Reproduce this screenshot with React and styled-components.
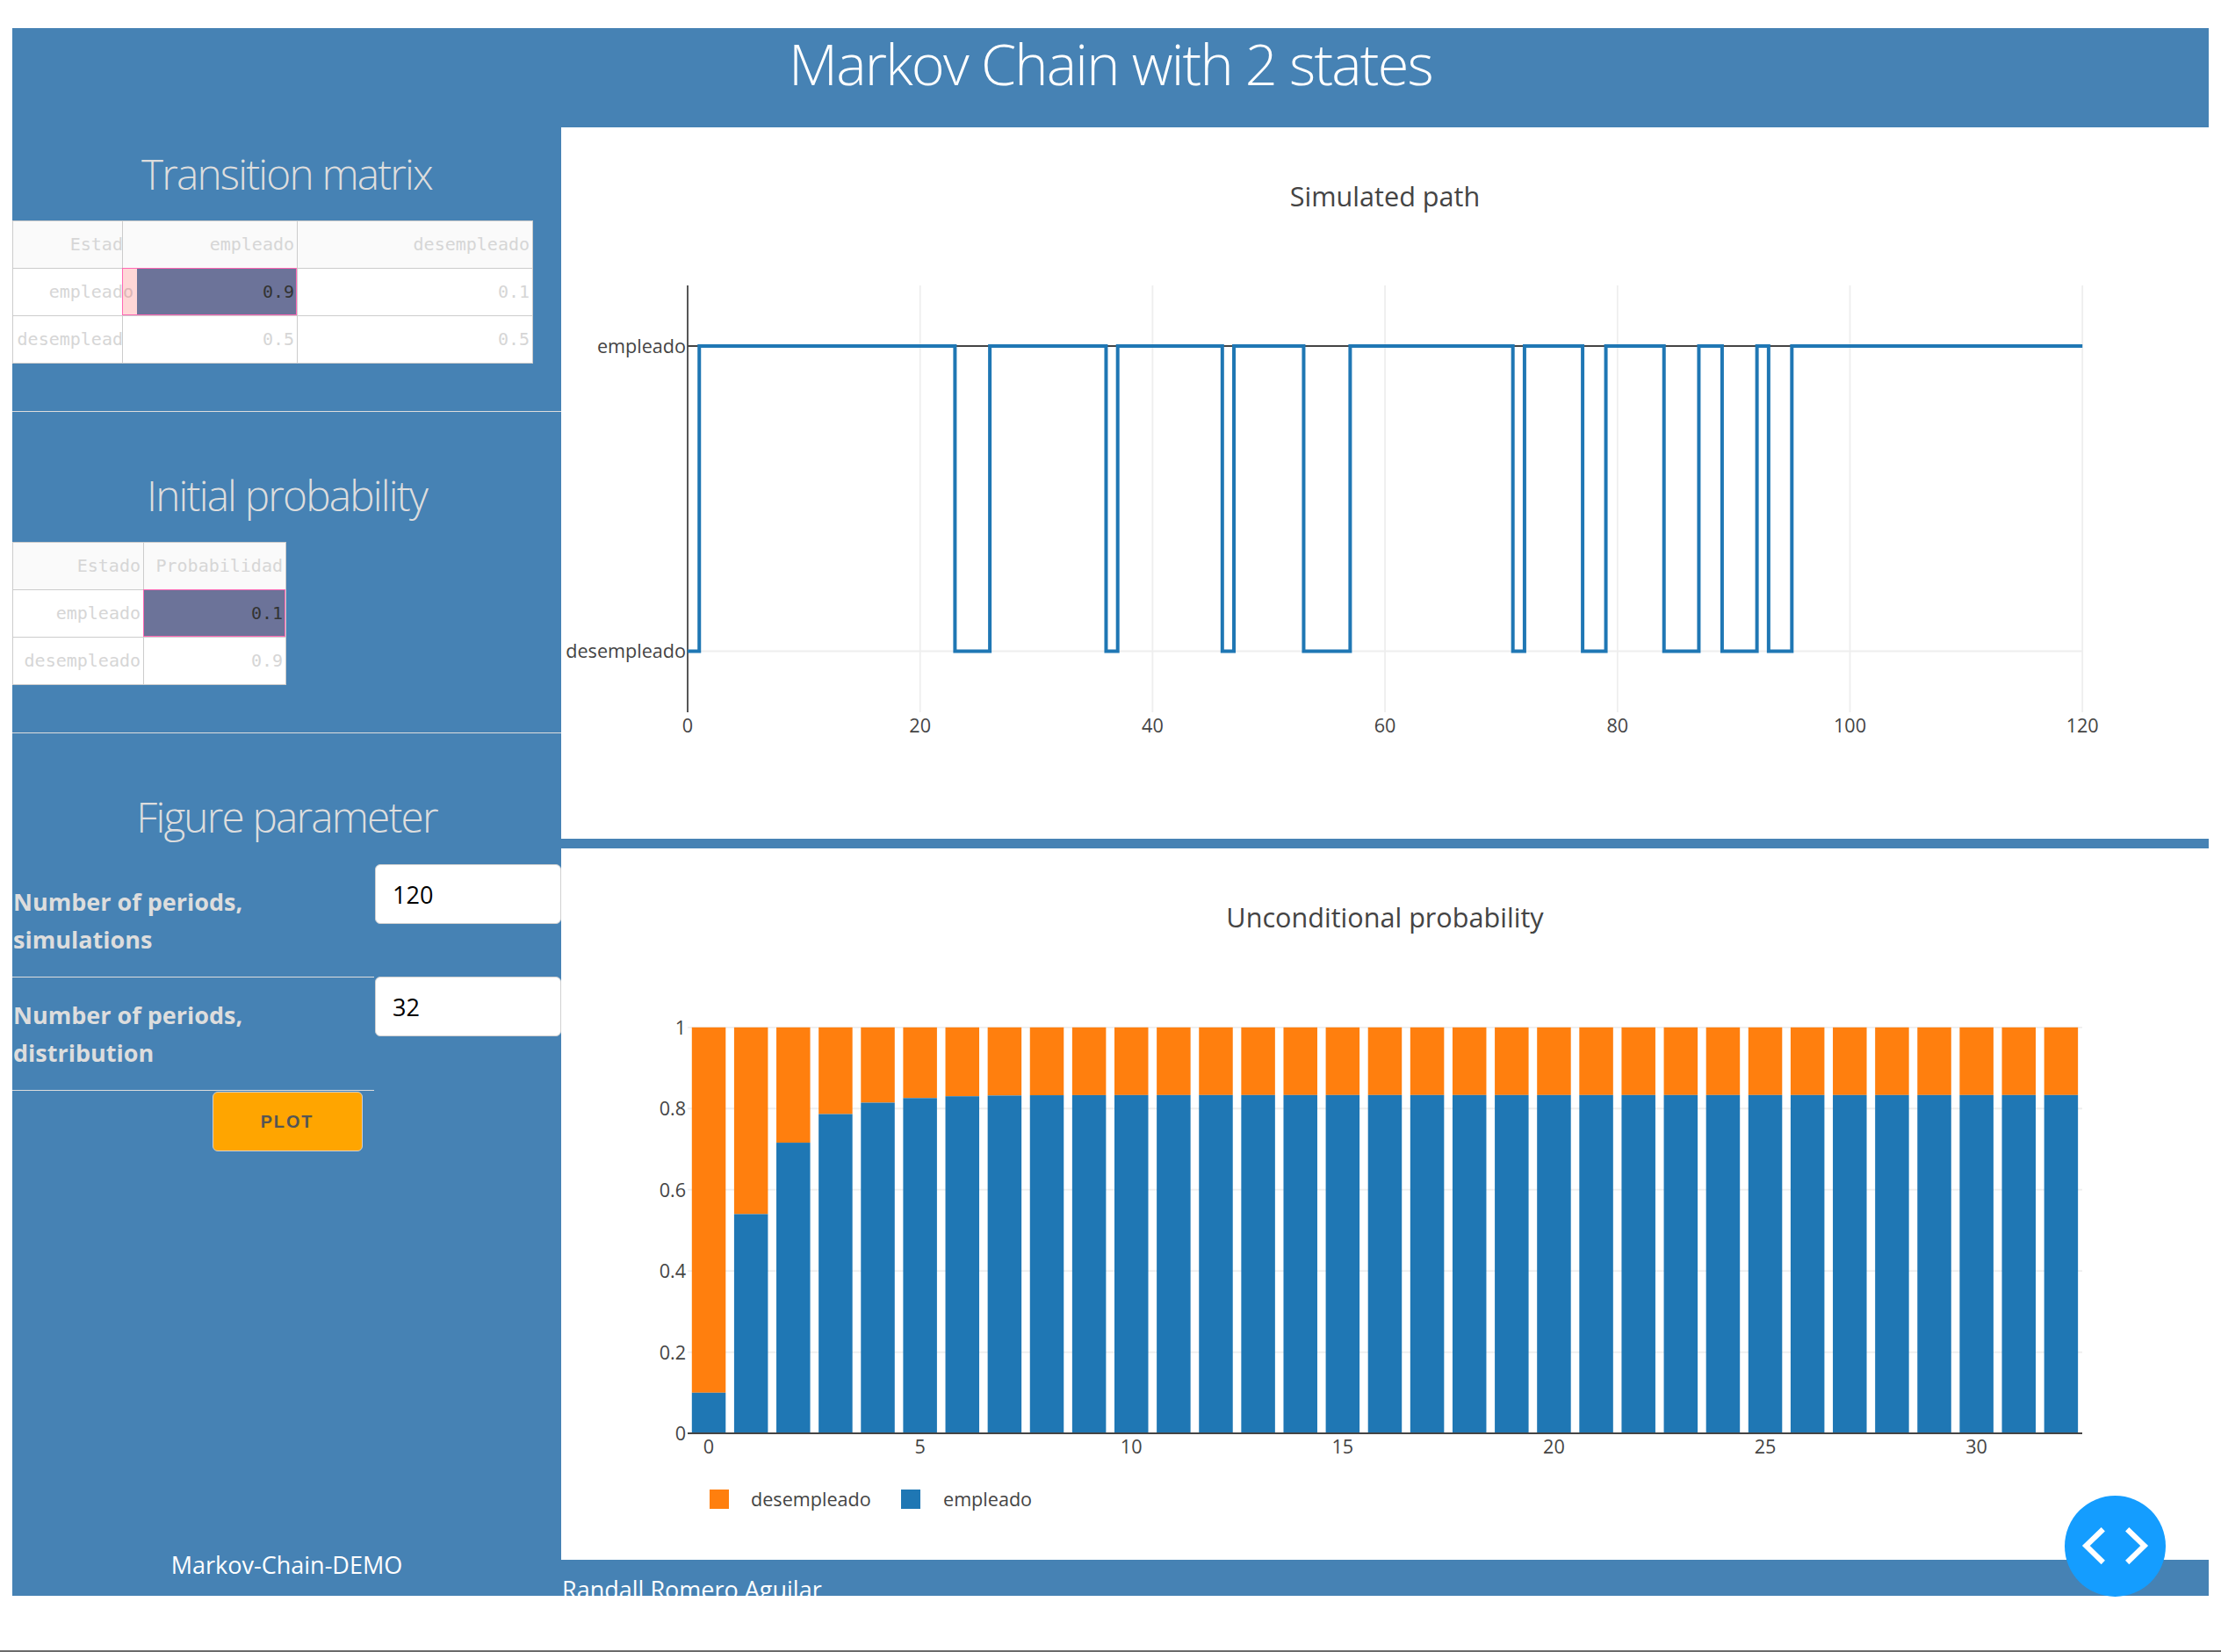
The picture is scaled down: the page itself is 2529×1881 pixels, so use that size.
import React from 'react'
import styled, { createGlobalStyle } from 'styled-components'

const STEEL = '#4682b4'
const BLUE = '#1f77b4'
const ORANGE = '#ff7f0e'

const GlobalStyle = createGlobalStyle`
  html, body {
    margin: 0;
    padding: 0;
    background: #fff;
    font-family: "Open Sans", "Liberation Sans", sans-serif;
  }
  * {
    box-sizing: border-box;
  }
`

// state changes of the simulated path, read from the chart: [period, state]
const SWITCHES = [1, 23, 26, 36, 37, 46, 47, 53, 57, 71, 72, 77, 79, 84, 87, 89, 92, 93, 95]

const pathX = (t) => 783 + t * 13.235
const Y_EMP = 394
const Y_DES = 741.5

const buildPath = () => {
  let d = `M${pathX(0)} ${Y_DES}`
  let y = Y_DES
  SWITCHES.forEach((t) => {
    const x = pathX(t)
    y = y === Y_DES ? Y_EMP : Y_DES
    d += ` H${x} V${y}`
  })
  return `${d} H${pathX(120)}`
}

const probabilities = () => {
  const values = [0.1]
  for (let i = 1; i <= 32; i++) {
    values.push(0.9 * values[i - 1] + 0.5 * (1 - values[i - 1]))
  }
  return values
}

const SimulatedPath = () => (
  <ChartSvg viewBox="639 145 1876 810">
    <ChartTitle x="1577" y="235">Simulated path</ChartTitle>
    {[20, 40, 60, 80, 100, 120].map((t) => (
      <line key={t} x1={pathX(t)} x2={pathX(t)} y1="325" y2="811" stroke="#eee" strokeWidth="1.8" />
    ))}
    <line x1="783" x2="2371" y1={Y_DES} y2={Y_DES} stroke="#eee" strokeWidth="1.8" />
    <line x1="783" x2="2371" y1={Y_EMP} y2={Y_EMP} stroke="#444" strokeWidth="1.8" />
    <line x1="783" x2="783" y1="325" y2="811" stroke="#444" strokeWidth="1.8" />
    <path d={buildPath()} fill="none" stroke={BLUE} strokeWidth="4" />
    <TickLabel x="781" y="402" textAnchor="end">empleado</TickLabel>
    <TickLabel x="781" y="749" textAnchor="end">desempleado</TickLabel>
    {[0, 20, 40, 60, 80, 100, 120].map((t) => (
      <TickLabel key={t} x={pathX(t)} y="834" textAnchor="middle">{t}</TickLabel>
    ))}
  </ChartSvg>
)

const Y0 = 1632
const UNIT = 462.2
const STEP = 48.12

const UnconditionalProbability = () => (
  <ChartSvg viewBox="639 966 1876 810">
    <ChartTitle x="1577" y="1056">Unconditional probability</ChartTitle>
    {[0.2, 0.4, 0.6, 0.8, 1].map((v) => (
      <line key={v} x1="783" x2="2371" y1={Y0 - v * UNIT} y2={Y0 - v * UNIT} stroke="#eee" strokeWidth="1.8" />
    ))}
    {probabilities().map((p, i) => {
      const x = 783 + STEP * i + 4.8
      return (
        <g key={i}>
          <rect x={x} y={Y0 - UNIT} width="38.5" height={(1 - p) * UNIT} fill={ORANGE} />
          <rect x={x} y={Y0 - p * UNIT} width="38.5" height={p * UNIT} fill={BLUE} />
        </g>
      )
    })}
    <line x1="783" x2="2371" y1={Y0} y2={Y0} stroke="#444" strokeWidth="2" />
    {[0, 0.2, 0.4, 0.6, 0.8, 1].map((v) => (
      <TickLabel key={v} x="781" y={Y0 - v * UNIT + 8} textAnchor="end">{v}</TickLabel>
    ))}
    {[0, 5, 10, 15, 20, 25, 30].map((t) => (
      <TickLabel key={t} x={807 + t * STEP} y="1655" textAnchor="middle">{t}</TickLabel>
    ))}
    <rect x="808" y="1696" width="22" height="22" fill={ORANGE} />
    <TickLabel x="855" y="1715">desempleado</TickLabel>
    <rect x="1026" y="1696" width="22" height="22" fill={BLUE} />
    <TickLabel x="1074" y="1715">empleado</TickLabel>
  </ChartSvg>
)

const DataTable = ({ columns, rows }) => (
  <Table $columns={columns}>
    {rows.flat().map((cell, i) => (
      <Cell key={i} $header={cell.header} $selected={cell.selected} $pink={cell.pink} $spill={cell.spill} $open={cell.open} $first={cell.first}>
        <span>
          {cell.text}
          {cell.tail && <CellTail>{cell.tail}</CellTail>}
        </span>
      </Cell>
    ))}
  </Table>
)

const transitionRows = [
  [
    { text: 'Estado', header: true, spill: true, first: true },
    { text: 'empleado', header: true },
    { text: 'desempleado', header: true },
  ],
  [
    { text: 'emplead', tail: 'o', spill: true, open: true, first: true },
    { text: '0.9', selected: true, pink: 16 },
    { text: '0.1' },
  ],
  [
    { text: 'desempleado', spill: true, first: true },
    { text: '0.5' },
    { text: '0.5' },
  ],
]

const initialRows = [
  [
    { text: 'Estado', header: true, first: true },
    { text: 'Probabilidad', header: true },
  ],
  [
    { text: 'empleado', first: true },
    { text: '0.1', selected: true },
  ],
  [
    { text: 'desempleado', first: true },
    { text: '0.9' },
  ],
]

const App = () => (
  <Page>
    <GlobalStyle />
    <Frame>
      <Header>Markov Chain with 2 states</Header>
      <Main>
        <Sidebar>
          <Section $first>
            <SectionTitle>Transition matrix</SectionTitle>
            <DataTable columns="124px 199px 268px" rows={transitionRows} />
          </Section>
          <Section>
            <SectionTitle>Initial probability</SectionTitle>
            <DataTable columns="148px 162px" rows={initialRows} />
          </Section>
          <Section $last>
            <SectionTitle $tall>Figure parameter</SectionTitle>
            <ParamRow>
              <ParamLabel>Number of periods, simulations</ParamLabel>
              <ParamInput defaultValue="120" />
            </ParamRow>
            <ParamRow>
              <ParamLabel>Number of periods, distribution</ParamLabel>
              <ParamInput defaultValue="32" $raised />
            </ParamRow>
            <PlotButton>PLOT</PlotButton>
          </Section>
          <SidebarFooter>Markov-Chain-DEMO</SidebarFooter>
        </Sidebar>
        <Content>
          <ChartPanel>
            <SimulatedPath />
          </ChartPanel>
          <ChartPanel>
            <UnconditionalProbability />
          </ChartPanel>
          <Footer>Randall Romero Aguilar</Footer>
        </Content>
      </Main>
    </Frame>
    <DebugButton>
      <svg width="115" height="115" viewBox="0 0 115 115" fill="none" stroke="#fff" strokeWidth="6.1">
        <path d="M43.8 38.2 L24.3 57 L43.8 76" />
        <path d="M71.2 38.2 L90.7 57 L71.2 76" />
      </svg>
    </DebugButton>
    <BottomEdge />
  </Page>
)

const Page = styled.div`
  display: flex;
  flex-direction: column;
  height: 1881px;
  padding: 32px 14px 0;
  overflow: hidden;
`

const Frame = styled.div`
  display: flex;
  flex-direction: column;
  height: 1785px;
  background: ${STEEL};
`

const Header = styled.h1`
  margin: 0;
  height: 113px;
  font-size: 64.8px;
  line-height: 80px;
  font-weight: 300;
  letter-spacing: -1.8px;
  text-align: center;
  color: #fff;
`

const Main = styled.div`
  display: flex;
  flex: 1;
  min-height: 0;
`

const Sidebar = styled.aside`
  display: flex;
  flex-direction: column;
  width: 625px;
  flex: none;
`

const Section = styled.section`
  padding-top: ${(p) => (p.$first ? '15px' : '57px')};
  padding-bottom: ${(p) => (p.$last ? '0' : '54px')};
  border-bottom: ${(p) => (p.$last ? 'none' : '1px solid #ddd')};
`

const SectionTitle = styled.h3`
  margin: 0;
  height: ${(p) => (p.$tall ? '92px' : '91px')};
  font-size: 47.7px;
  line-height: 76px;
  font-weight: 300;
  letter-spacing: -1.8px;
  text-align: center;
  color: #ddd;
`

const Table = styled.div`
  display: grid;
  grid-template-columns: ${(p) => p.$columns};
  grid-auto-rows: 54px;
  width: max-content;
  border-right: 1px solid #ccc;
  border-bottom: 1px solid #ccc;
  border-left: 1px solid #ccc;
`

const Cell = styled.div`
  position: relative;
  display: flex;
  align-items: center;
  justify-content: flex-end;
  padding-right: ${(p) => (p.$spill ? '0' : '3px')};
  padding-bottom: 2px;
  font-family: "DejaVu Sans Mono", "Liberation Mono", monospace;
  font-size: 20px;
  white-space: nowrap;
  overflow: ${(p) => (p.$open ? 'visible' : 'hidden')};
  z-index: ${(p) => (p.$open ? 1 : 0)};
  color: ${(p) => (p.$selected ? '#333' : '#d6d6d6')};
  background: ${(p) => {
    if (p.$selected) return `linear-gradient(to right, #ffd7d7 ${p.$pink || 0}px, #6c7399 ${p.$pink || 0}px)`
    return p.$header ? '#fafafa' : '#fff'
  }};
  border-left: ${(p) => (p.$first ? '0' : '1px solid #ccc')};
  border-top: 1px solid #ccc;
  outline: ${(p) => (p.$selected ? '1px solid #ff69b4' : 'none')};
  outline-offset: -1px;

  span {
    flex: none;
    margin-right: ${(p) => (p.$spill ? '-13px' : '0')};
  }
`

// the last letter of a row header, seen through the pink corner of the selection
const CellTail = styled.b`
  font-weight: 400;
  color: #dcb6b6;
`

const ParamRow = styled.div`
  display: flex;
  align-items: flex-start;
  gap: 1px;
`

const ParamLabel = styled.label`
  width: 412px;
  height: 129px;
  padding: 21px 0 0 1px;
  font-size: 27px;
  line-height: 43px;
  font-weight: 700;
  color: #ddd;
  border-bottom: 1px solid #ddd;
`

const ParamInput = styled.input`
  width: 212px;
  height: 68px;
  margin-top: ${(p) => (p.$raised ? '-1px' : '0')};
  padding: 0 19px;
  font-family: "Open Sans", sans-serif;
  font-size: 27px;
  color: #000;
  background: #fff;
  border: 1.5px solid #d1d1d1;
  border-radius: 6px;
`

const PlotButton = styled.button`
  display: block;
  width: 171px;
  height: 68px;
  margin: 1px 0 0 227.5px;
  padding: 0;
  font-family: "Liberation Sans", Arial, sans-serif;
  font-size: 19.8px;
  font-weight: 700;
  letter-spacing: 2px;
  color: #555;
  background: #ffa500;
  border: 1.5px solid #d1d1d1;
  border-radius: 6px;
`

const SidebarFooter = styled.div`
  margin-top: auto;
  padding-bottom: 17px;
  font-size: 27px;
  line-height: 36px;
  text-align: center;
  color: #fff;
`

const Content = styled.div`
  display: flex;
  flex-direction: column;
  flex: 1;
  min-width: 0;
  gap: 11px;
`

const ChartPanel = styled.div`
  height: 810px;
  background: #fff;
`

const ChartSvg = styled.svg`
  display: block;
  width: 100%;
  height: 100%;
`

const ChartTitle = styled.text`
  font-family: "Open Sans", sans-serif;
  font-size: 30.6px;
  fill: #444;
  text-anchor: middle;
`

const TickLabel = styled.text`
  font-family: "Open Sans", sans-serif;
  font-size: 21.6px;
  fill: #444;
`

const Footer = styled.footer`
  height: 30px;
  margin-top: -11px;
  padding-top: 16px;
  flex: 1;
  overflow: hidden;
  font-size: 27px;
  line-height: 36px;
  padding-left: 1px;
  color: #fff;
`

const DebugButton = styled.div`
  position: fixed;
  right: 63px;
  bottom: 63px;
  width: 115px;
  height: 115px;
  border-radius: 50%;
  background: #149dff;

  svg {
    display: block;
  }
`

const BottomEdge = styled.div`
  margin: auto -14px 0;
  height: 2px;
  flex: none;
  background: #6b6b6b;
`

export default App
